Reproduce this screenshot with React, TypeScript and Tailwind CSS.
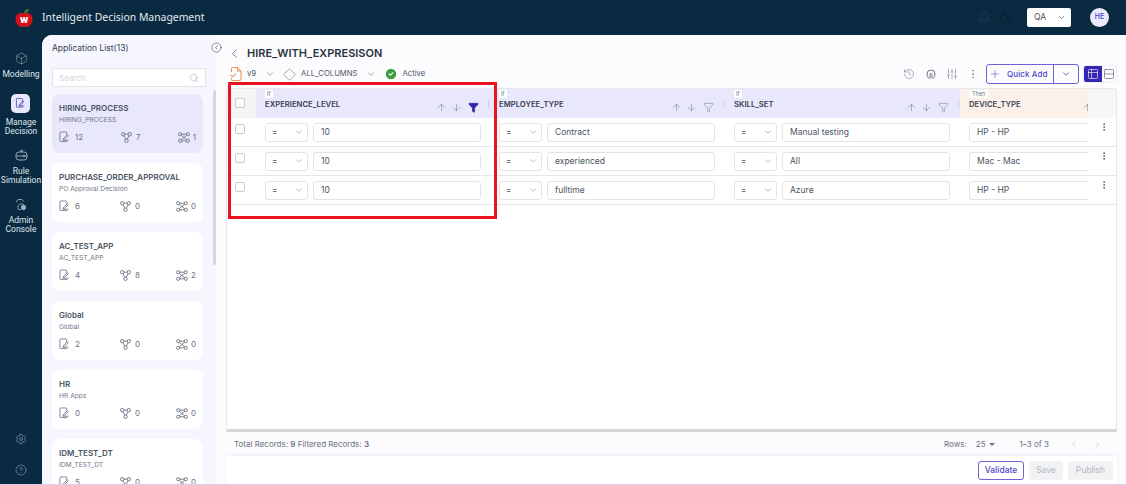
import { ArrowDown, ArrowUp, Bell, Box, ChevronDown, ChevronLeft, ChevronRight, CircleCheck, CircleChevronLeft, CircleHelp, Diamond, EllipsisVertical, Filter, History, Moon, Plus, Search, Settings, SlidersVertical, Table2, Rows2 } from "lucide-react";

const apps = [
  { name: "HIRING_PROCESS", sub: "HIRING_PROCESS", a: 12, b: 7, c: 1, active: true },
  { name: "PURCHASE_ORDER_APPROVAL", sub: "PO Approval Decision", a: 6, b: 0, c: 0 },
  { name: "AC_TEST_APP", sub: "AC_TEST_APP", a: 4, b: 8, c: 2 },
  { name: "Global", sub: "Global", a: 2, b: 0, c: 0 },
  { name: "HR", sub: "HR Apps", a: 0, b: 0, c: 0 },
  { name: "IDM_TEST_DT", sub: "IDM_TEST_DT", a: 5, b: 0, c: 0 },
];

const rows = [
  { exp: "10", emp: "Contract", skill: "Manual testing", device: "HP - HP" },
  { exp: "10", emp: "experienced", skill: "All", device: "Mac - Mac" },
  { exp: "10", emp: "fulltime", skill: "Azure", device: "HP - HP" },
];

// hand drawn ones, lucide has nothing close
const DocPenIcon = ({ active }: { active?: boolean }) => (
  <svg width="11" height="12" viewBox="0 0 12 12" fill="none" stroke="currentColor" strokeWidth="0.9">
    <path d="M8.500 5V1.500a1 1 0 0 0-1-1H2a1 1 0 0 0-1 1v8.500a1 1 0 0 0 1 1h7" />
    <path d="M4.500 9l.4-1.500L9 3.500l1.100 1.100L6 8.600z" fill={active ? "#e8e7fb" : "#fff"} />
    <path d="M4 9.500h6.500" />
  </svg>
);

const BranchIcon = () => (
  <svg width="11" height="11" viewBox="0 0 11 11" fill="none" stroke="currentColor" strokeWidth="0.9">
    <circle cx="2.200" cy="2.200" r="1.700" />
    <circle cx="8.800" cy="2.200" r="1.700" />
    <circle cx="5.500" cy="8.800" r="1.700" />
    <path d="M3 3.800 4.800 7.300M8 3.800 6.200 7.300M3.900 2.200h3.200" />
  </svg>
);

const LinkedIcon = () => (
  <svg width="12" height="11" viewBox="0 0 12 11" fill="none" stroke="currentColor" strokeWidth="0.9">
    <circle cx="2.200" cy="2.200" r="1.600" />
    <circle cx="9.800" cy="2.200" r="1.600" />
    <circle cx="2.200" cy="8.800" r="1.600" />
    <circle cx="9.800" cy="8.800" r="1.600" />
    <path d="M3.800 2.200h4.400M3.800 8.800h4.400M3.300 3.300l5.400 4.400M8.700 3.300 3.300 7.700" />
  </svg>
);

const SimIcon = ({ className }: { className?: string }) => (
  <svg width="13" height="13" viewBox="0 0 13 13" fill="none" stroke="currentColor" strokeWidth="0.9" className={className}>
    <rect x="1" y="3" width="11" height="8" rx="3" />
    <path d="M1 7h7M10 7h2" />
    <circle cx="9" cy="7" r="1" />
    <circle cx="6.500" cy="2" r="1" />
  </svg>
);

const AdminIcon = ({ className }: { className?: string }) => (
  <svg width="13" height="13" viewBox="0 0 13 13" fill="none" stroke="currentColor" strokeWidth="0.9" className={className}>
    <path d="M7 11.500H4.500a3.500 3.500 0 1 1 6-3.500" />
    <path d="M2 4.500 4 1.500h4l1.500 2" />
    <circle cx="9.500" cy="9.500" r="2.200" fill="currentColor" />
  </svg>
);

const FingerIcon = () => (
  <svg width="12" height="12" viewBox="0 0 12 12" fill="none" stroke="currentColor" strokeWidth="1" className="ml-[9px]">
    <path d="M4 10.500C2.700 9.500 2 8 2 6a4 4 0 0 1 8 0c0 2-.7 3.500-2 4.500" />
    <path d="M5 10.500V6.500a1 1 0 0 1 2 0v4" />
  </svg>
);

const FileTick = () => (
  <svg width="12" height="14" viewBox="0 0 12 14" fill="none" stroke="#e8833a" strokeWidth="0.9" className="ml-[4px] shrink-0">
    <path d="M1.500 5V1.500a1 1 0 0 1 1-1H7.500L11 4v8.500a1 1 0 0 1-1 1H2.500a1 1 0 0 1-1-1V11" />
    <path d="M7.500.5V4H11" />
    <path d="M.5 8l2 2 3.500-3.500" stroke="#e0572a" />
  </svg>
);

const Nav = ({ icon, label, active }: { icon: React.ReactNode; label: string[]; active?: boolean }) => (
  <div className={`flex flex-col items-center font-['Roboto',sans-serif] text-[8.5px] leading-[9.5px] text-[#dfe6ec] ${active ? "mt-[2px]" : ""}`}>
    {active ? (
      <div className="mb-[5px] flex h-[19px] w-[19px] items-center justify-center rounded-[5px] bg-[#e8e7fb] text-[#3a2fb5]">{icon}</div>
    ) : (
      <div className="mb-[5px] text-[#9fb0bd]">{icon}</div>
    )}
    {label.map((l) => (
      <span key={l} className="whitespace-nowrap">{l}</span>
    ))}
  </div>
);

const AppCard = ({ app }: { app: (typeof apps)[number] }) => (
  <div className={`h-[59px] w-[151px] shrink-0 rounded-[8px] px-[7px] pt-[9px] ${app.active ? "bg-[#e8e7fb]" : "bg-white"}`}>
    <div className="text-[8px] font-semibold leading-[11px] text-[#4b5563]">{app.name}</div>
    <div className="mt-[1px] text-[6.7px] leading-[10px] text-[#6f7888]">{app.sub}</div>
    <div className="mt-[6px] flex items-center justify-between text-[8px] leading-[12px] text-[#6b7280]">
      <span className="flex w-[25px] items-center gap-[5px]"><DocPenIcon active={app.active} />{app.a}</span>
      <span className="flex items-center gap-[4px]"><BranchIcon />{app.b}</span>
      <span className="flex items-center gap-[3px]"><LinkedIcon />{app.c}</span>
    </div>
  </div>
);

const HeadCell = ({ tag, title, filtered, then }: { tag: string; title: string; filtered?: boolean; then?: boolean }) => (
  <div className={`relative h-[29px] overflow-hidden pl-[9px] ${then ? "bg-[#fbf1ea]" : "bg-[#e8e7fb]"}`}>
    <div className={`mt-[1px] h-[8px] w-fit bg-white text-[5.5px] leading-[8px] text-[#6b7280] ${then ? "px-[3px]" : "px-[2px]"}`}>{tag}</div>
    <div className="mt-[1px] text-[7.7px] font-semibold leading-[12px] text-[#374151]">{title}</div>
    <div className={`absolute top-[13px] flex items-center text-[#6f7d8c] ${then ? "left-[122px]" : filtered ? "left-[180px]" : "left-[181px]"}`}>
      <ArrowUp size={11} strokeWidth={1.2} />
      <ArrowDown size={11} strokeWidth={1.2} className="ml-[4px]" />
      {filtered ? <Filter size={11} className="ml-[6px] fill-[#2f27a8] text-[#2f27a8]" /> : <Filter size={11} strokeWidth={1.2} className="ml-[6px]" />}
    </div>
    {!then && <div className="absolute right-[1px] top-[11px] h-[8px] w-[1px] bg-[#cfd3de]" />}
  </div>
);

const Check = () => <div className="h-[10px] w-[10px] rounded-[2px] border border-[#c7ccd3] bg-white" />;

const RuleCell = ({ value }: { value: string }) => (
  <div className="flex items-center gap-[5px] pl-[9px] pr-[9px]">
    <div className="flex h-[19px] w-[43px] shrink-0 items-center justify-between rounded-[3px] border border-[#e2e4e8] bg-white pl-[6px] pr-[3px] text-[8px] text-[#4b5563]">
      =<ChevronDown size={10} strokeWidth={1.2} className="text-[#6b7280]" />
    </div>
    <div className="flex h-[19px] w-[168px] shrink-0 items-center rounded-[3px] border border-[#e2e4e8] bg-white pl-[7px] text-[8.5px] text-[#4b5563]">{value}</div>
  </div>
);

export default function App() {
  return (
    <div className="relative flex h-[485px] w-[1126px] flex-col overflow-hidden bg-[#0a2a42] font-['Inter',sans-serif]">
      <header className="flex h-[35px] shrink-0 items-center pl-[15px] pr-[18px]">
        <svg width="18" height="20" viewBox="0 0 18 20" className="shrink-0">
          <path d="M9 5.500C5.500 4 .5 5.500.5 11c0 4 3 8 5.500 8 1 0 2-.4 3-.4s2 .4 3 .4c2.500 0 5.500-4 5.500-8 0-5.500-5-7-8.500-5.500z" fill="#d4101a" />
          <path d="M9 5.500C9.200 3 11 1.500 14 1c-.2 1.800-2 3.800-5 4.500z" fill="#4f8a2f" />
          <text x="9" y="15" textAnchor="middle" fontSize="9.500" fontWeight="800" fill="#fff" fontFamily="Inter, sans-serif">w</text>
        </svg>
        <div className="ml-[9px] font-['Noto_Sans',sans-serif] text-[10.4px] text-[#e4eaef]">Intelligent Decision Management</div>
        <div className="ml-auto flex items-center">
          <Bell size={13} strokeWidth={1.2} className="text-[#2c4354]" />
          <Moon size={13} strokeWidth={1.5} className="ml-[8px] text-[#0d1620]" />
          <div className="ml-[15px] flex h-[19px] w-[44px] items-center justify-between rounded-[2px] bg-white pl-[7px] pr-[5px] text-[8.5px] text-[#4b5563]">
            QA<ChevronDown size={9} />
          </div>
          <div className="ml-[19px] mr-[-1px] flex h-[19px] w-[19px] items-center justify-center rounded-full bg-[#eceaff] text-[7px] font-medium text-[#4338ca]">HE</div>
        </div>
      </header>

      <div className="flex min-h-0 flex-1">
        <nav className="flex w-[42px] shrink-0 flex-col items-center pt-[17px]">
          <div className="flex flex-col items-center gap-[12px]">
            <Nav icon={<Box size={13} strokeWidth={1} />} label={["Modelling"]} />
            <Nav icon={<span className="scale-90"><DocPenIcon active /></span>} label={["Manage", "Decision"]} active />
            <Nav icon={<SimIcon />} label={["Rule", "Simulation"]} />
            <Nav icon={<AdminIcon />} label={["Admin", "Console"]} />
          </div>
          <div className="mt-auto flex flex-col items-center gap-[19px] pb-[8px] text-[#9fb0bd]">
            <Settings size={12} strokeWidth={1.1} />
            <CircleHelp size={12} strokeWidth={1.1} />
          </div>
        </nav>

        <div className="flex min-w-0 flex-1 overflow-hidden rounded-tl-[10px] bg-white">
          <aside className="relative flex w-[174px] shrink-0 flex-col bg-[#f6f6ff] pl-[10px]">
            <div className="pt-[8px] text-[8.5px] leading-[11px] text-[#374151]">Application List(13)</div>
            <div className="mt-[14px] flex h-[19px] w-[154px] shrink-0 items-center justify-between rounded-[2px] border border-[#e2e4e8] bg-white pl-[6px] pr-[6px] text-[8px] text-[#d1d5db]">
              Search<Search size={10} strokeWidth={1.2} className="text-[#9ca3af]" />
            </div>
            <div className="mt-[7px] flex flex-col gap-[10px]">
              {apps.map((app) => (
                <AppCard key={app.name} app={app} />
              ))}
            </div>
            <div className="absolute right-[-1px] top-[55px] h-[175px] w-[4px] rounded bg-[#d5d6de]" />
          </aside>

          <main className="relative flex min-w-0 flex-1 flex-col bg-[#fcfcff] pl-[10px] pr-[9px]">
            <CircleChevronLeft size={11} strokeWidth={1.2} className="absolute left-[-5px] top-[7px] rounded-full bg-white text-[#1f2937]" />
            <div className="flex h-[30px] shrink-0 items-center pl-[1px] pt-[6px]">
              <ChevronLeft size={15} strokeWidth={1.2} className="text-[#4b5563]" />
              <div className="ml-[5px] text-[11px] font-semibold text-[#2b3440]">HIRE_WITH_EXPRESISON</div>
            </div>
            <div className="flex h-[18px] shrink-0 items-center text-[7.7px] text-[#4b5563]">
              <FileTick />
              <span className="ml-[5px]">v9</span>
              <ChevronDown size={10} strokeWidth={1.2} className="ml-[9px]" />
              <Diamond size={13} strokeWidth={0.9} className="ml-[8px]" />
              <span className="ml-[5px]">ALL_COLUMNS</span>
              <ChevronDown size={10} strokeWidth={1.2} className="ml-[8px]" />
              <CircleCheck size={14} className="ml-[8px] fill-[#3f9e3f] text-white" />
              <span className="ml-[5px]">Active</span>
              <div className="ml-auto flex items-center text-[8px] text-[#6b7280]">
                <History size={12} strokeWidth={1.1} className="mr-[1px]" />
                <FingerIcon />
                <SlidersVertical size={12} strokeWidth={1.2} className="ml-[9px]" />
                <EllipsisVertical size={12} strokeWidth={1.4} className="ml-[9px]" />
                <div className="ml-[7px] flex h-[20px] w-[93px] items-center rounded-[3px] border border-[#6d62d6] font-medium text-[#4f46c8]">
                  <div className="flex w-[67px] items-center border-r border-[#6d62d6] pl-[2px] leading-[18px]">
                    <Plus size={12} strokeWidth={1.1} />
                    <span className="ml-[6px] tracking-[0.1px]">Quick Add</span>
                  </div>
                  <ChevronDown size={10} className="ml-[7px]" />
                </div>
                <div className="ml-[4px] flex h-[18px] w-[34px] overflow-hidden rounded-[3px] border border-[#eceef2]">
                  <div className="flex w-[18px] items-center justify-center bg-[#3426b4]"><Table2 size={12} strokeWidth={1.2} className="text-white" /></div>
                  <div className="flex flex-1 items-center justify-center"><Rows2 size={12} strokeWidth={1.2} className="text-[#4b5563]" /></div>
                </div>
              </div>
            </div>

            <div className="mt-[5px] grid h-[344px] shrink-0 grid-cols-[29px_234px_235px_235px_128px_28px] content-start overflow-hidden rounded-t-[3px] border border-[#e5e7eb] border-b-[3px] border-b-[#d4d6dc] bg-white">
              <div className="flex h-[29px] items-center bg-[#f4f5f7] pb-[2px] pl-[8px]"><Check /></div>
              <HeadCell tag="If" title="EXPERIENCE_LEVEL" filtered />
              <HeadCell tag="If" title="EMPLOYEE_TYPE" />
              <HeadCell tag="If" title="SKILL_SET" />
              <HeadCell tag="Then" title="DEVICE_TYPE" then />
              <div className="h-[29px] bg-[#f7f7f8]" />
              {rows.map((r) => (
                <div key={r.emp} className="col-span-6 grid h-[29px] grid-cols-subgrid items-center border-b border-[#e5e7eb]">
                  <div className="flex pb-[6px] pl-[8px]"><Check /></div>
                  <RuleCell value={r.exp} />
                  <RuleCell value={r.emp} />
                  <RuleCell value={r.skill} />
                  <div className="overflow-hidden pl-[9px]">
                    <div className="flex h-[19px] w-[140px] items-center rounded-[3px] border border-[#e2e4e8] bg-white pl-[7px] text-[8.5px] text-[#4b5563]">{r.device}</div>
                  </div>
                  <div className="flex justify-center pb-[10px] pl-[3px] text-[#4b5563]"><EllipsisVertical size={10} /></div>
                </div>
              ))}
            </div>

            <div className="flex h-[24px] shrink-0 items-center pl-[8px] text-[8px] text-[#6b7280]">
              <span>Total Records: <b className="font-semibold">9</b> Filtered Records: <b className="font-semibold">3</b></span>
              <div className="ml-auto flex items-center pr-[14px]">
                <span>Rows:</span>
                <span className="ml-[9px] flex items-center gap-[3px]">25<span className="mt-[1px] border-x-[3px] border-t-[3px] border-x-transparent border-t-[#6b7280]" /></span>
                <span className="ml-[25px]">1–3 of 3</span>
                <ChevronLeft size={11} strokeWidth={1.3} className="ml-[19px] text-[#b0b5bd]" />
                <ChevronRight size={11} strokeWidth={1.3} className="ml-[13px] text-[#b0b5bd]" />
              </div>
            </div>

            <div className="flex min-h-0 flex-1 items-start justify-end gap-[5px] bg-white pr-[4px] pt-[5px] text-[8.5px] shadow-[0_-1px_4px_rgba(60,60,120,0.08)]">
              <div className="flex h-[19px] w-[46px] items-center justify-center rounded-[3px] border border-[#6d62d6] font-medium text-[#4f46c8]">Validate</div>
              <div className="flex h-[19px] w-[34px] items-center justify-center rounded-[3px] bg-[#f1f2f4] text-[#b6bac1]">Save</div>
              <div className="flex h-[19px] w-[45px] items-center justify-center rounded-[3px] bg-[#f1f2f4] text-[#b6bac1]">Publish</div>
            </div>

            <div className="pointer-events-none absolute left-[12px] top-[47px] h-[137px] w-[269px] border-[3px] border-[#e8131c]" />
          </main>
        </div>
      </div>
      <div className="h-[1px] shrink-0 bg-[#d6d2e4]" />
    </div>
  );
}
